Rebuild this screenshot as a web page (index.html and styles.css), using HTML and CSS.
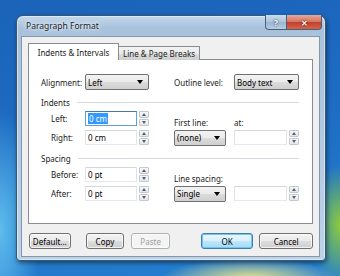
FILE: index.html
```html
<!DOCTYPE html>
<html lang="en">
<head>
    <meta charset="UTF-8">
    <title>Paragraph Format</title>
    <link rel="stylesheet" href="styles.css">
</head>
<body>
    <div class="desktop">
        <div class="window">
            <div class="titlebar">
                <span class="title">Paragraph Format</span>
                <div class="caption-btns">
                    <span class="cap-btn help-btn">?</span>
                    <span class="cap-btn close-btn">✕</span>
                </div>
            </div>
            <div class="client">
                <div class="tabs">
                    <div class="tab active">Indents &amp; Intervals</div>
                    <div class="tab">Line &amp; Page Breaks</div>
                </div>
                <div class="panel">
                    <div class="row-top">
                        <div class="col-left">
                            <span class="lbl lbl-align">Alignment:</span>
                            <div class="combo combo-align">Left<span class="arrow"></span></div>
                        </div>
                        <div class="col-right">
                            <span class="lbl lbl-outline">Outline level:</span>
                            <div class="combo combo-outline">Body text<span class="arrow"></span></div>
                        </div>
                    </div>

                    <div class="group-head"><span>Indents</span><span class="rule"></span></div>
                    <div class="group-body">
                        <div class="col-left">
                            <div class="field">
                                <span class="lbl lbl-field">Left:</span>
                                <div class="edit focused"><span class="sel">0 cm</span></div>
                                <div class="spin"><span class="up"></span><span class="down"></span></div>
                            </div>
                            <div class="field">
                                <span class="lbl lbl-field">Right:</span>
                                <div class="edit">0 cm</div>
                                <div class="spin"><span class="up"></span><span class="down"></span></div>
                            </div>
                        </div>
                        <div class="col-right stack">
                            <div class="label-row">
                                <span class="lbl lbl-first">First line:</span>
                                <span class="lbl">at:</span>
                            </div>
                            <div class="field">
                                <div class="combo combo-small">(none)<span class="arrow"></span></div>
                                <div class="edit edit-at"></div>
                                <div class="spin"><span class="up"></span><span class="down"></span></div>
                            </div>
                        </div>
                    </div>

                    <div class="group-head"><span>Spacing</span><span class="rule"></span></div>
                    <div class="group-body">
                        <div class="col-left">
                            <div class="field">
                                <span class="lbl lbl-field">Before:</span>
                                <div class="edit">0 pt</div>
                                <div class="spin"><span class="up"></span><span class="down"></span></div>
                            </div>
                            <div class="field">
                                <span class="lbl lbl-field">After:</span>
                                <div class="edit">0 pt</div>
                                <div class="spin"><span class="up"></span><span class="down"></span></div>
                            </div>
                        </div>
                        <div class="col-right stack">
                            <div class="label-row">
                                <span class="lbl">Line spacing:</span>
                            </div>
                            <div class="field">
                                <div class="combo combo-small">Single<span class="arrow"></span></div>
                                <div class="edit edit-at"></div>
                                <div class="spin"><span class="up"></span><span class="down"></span></div>
                            </div>
                        </div>
                    </div>
                </div>

                <div class="buttons">
                    <button class="btn btn-default">Default...</button>
                    <button class="btn btn-copy">Copy</button>
                    <button class="btn btn-paste" disabled>Paste</button>
                    <button class="btn btn-ok">OK</button>
                    <button class="btn btn-cancel">Cancel</button>
                </div>
            </div>
        </div>
    </div>
</body>
</html>
```

FILE: styles.css
```css
body {
    margin: 0;
    width: 340px;
    height: 276px;
    overflow: hidden;
    font-family: "Noto Sans", "Open Sans", sans-serif;
    font-size: 8px;
    color: #1a1a1a;
    background:
        radial-gradient(ellipse 40px 120px at 0px 230px, #5fbdee 0%, rgba(95, 189, 238, 0) 100%),
        radial-gradient(ellipse 30px 60px at 340px 225px, #8ccb3c 0%, rgba(140, 203, 60, 0) 100%),
        radial-gradient(ellipse 90px 22px at 250px 280px, #f6eb86 0%, rgba(246, 235, 134, 0) 100%),
        linear-gradient(170deg, #1a63b9 0%, #1e6dc3 50%, #2580d0 100%);
}

.desktop {
    padding: 15px 0 0 16px;
}

.window {
    width: 310px;
    height: 246px;
    box-sizing: border-box;
    border: 1px solid #3d556e;
    border-radius: 7px 7px 4px 4px;
    background: linear-gradient(180deg, #c3d8ec 0%, #a8c2dc 12px, #b3cce4 60%, #bcd3e9 100%);
    box-shadow: 1px 2px 4px rgba(0, 0, 0, 0.45), inset 0 0 0 1px rgba(255, 255, 255, 0.45);
    padding: 0 5px 3px 4px;
    display: flex;
    flex-direction: column;
}

.titlebar {
    height: 20px;
    display: flex;
    align-items: flex-start;
    justify-content: space-between;
}

.title {
    margin: 4px 0 0 5px;
    font-size: 8.5px;
    color: #141c26;
    text-shadow: 0 0 6px #fff, 0 0 3px #fff;
}

.caption-btns {
    display: flex;
    margin: -1px -2px 0 0;
}

.cap-btn {
    height: 14px;
    display: flex;
    align-items: center;
    justify-content: center;
    border: 1px solid #4a5f76;
    border-top: none;
    font-weight: bold;
    color: #fff;
}

.help-btn {
    width: 20px;
    border-radius: 0 0 0 4px;
    background: linear-gradient(180deg, #c9dbec 0%, #abc4dd 50%, #98b5d2 51%, #b6cde3 100%);
    font-size: 9px;
    text-shadow: 0 0 2px #33485e, 0 0 1px #33485e;
}

.close-btn {
    width: 34px;
    border-left: none;
    border-radius: 0 0 4px 0;
    background: linear-gradient(180deg, #e7a79a 0%, #d5735f 50%, #c2402a 51%, #d5634b 100%);
    font-size: 8px;
    text-shadow: 0 0 2px #4a130a, 0 0 1px #4a130a;
}

.client {
    flex: 1;
    background: #f0f0f0;
    border: 1px solid #8497ab;
    padding: 6px 6px 0 6px;
    display: flex;
    flex-direction: column;
}

.tabs {
    display: flex;
    align-items: flex-end;
    height: 17px;
    position: relative;
    z-index: 1;
}

.tab {
    height: 14px;
    display: flex;
    align-items: center;
    justify-content: center;
    white-space: nowrap;
    border: 1px solid #898c95;
    border-bottom: none;
    background: linear-gradient(180deg, #f2f2f2 0%, #ebebeb 50%, #dddddd 51%, #cfcfcf 100%);
    box-sizing: border-box;
    width: 82px;
}

.tab.active {
    width: 91px;
    height: 17px;
    background: #fff;
    margin-right: -1px;
    position: relative;
    z-index: 2;
}

.panel {
    height: 165px;
    box-sizing: border-box;
    border: 1px solid #898c95;
    margin-top: -1px;
    background: #fff;
    padding: 14px 13px 0 12px;
}

.lbl {
    white-space: nowrap;
}

.row-top,
.group-body {
    display: flex;
}

.col-left {
    width: 133px;
    flex-shrink: 0;
    display: flex;
    align-items: center;
}

.group-body .col-left {
    flex-direction: column;
    align-items: stretch;
    gap: 4px;
}

.col-right {
    display: flex;
    align-items: center;
}

.col-right.stack {
    flex-direction: column;
    align-items: stretch;
    justify-content: flex-end;
}

.lbl-align {
    width: 44px;
}

.lbl-outline {
    width: 60px;
}

.group-head {
    display: flex;
    align-items: center;
    height: 12px;
    margin: 6px 0 3px;
}

.rule {
    flex: 1;
    height: 1px;
    margin-left: 7px;
    background: #d5d9de;
}

.group-head + .group-body {
    margin-bottom: 7px;
}

.field {
    display: flex;
    align-items: center;
    height: 15px;
}

.lbl-field {
    width: 34px;
    padding-left: 10px;
}

.label-row {
    display: flex;
    height: 12px;
    align-items: center;
    margin-bottom: 2px;
}

.lbl-first {
    width: 60px;
}

.combo {
    height: 16px;
    box-sizing: border-box;
    border: 1px solid #707070;
    border-radius: 2px;
    background: linear-gradient(180deg, #f2f2f2 0%, #ebebeb 50%, #dddddd 51%, #cfcfcf 100%);
    display: flex;
    align-items: center;
    justify-content: space-between;
    padding: 0 5px 0 2px;
    color: #000;
}

.combo-align {
    width: 64px;
}

.combo-outline {
    width: 65px;
}

.combo-small {
    width: 52px;
    margin-right: 8px;
}

.arrow {
    width: 0;
    height: 0;
    border-left: 3px solid transparent;
    border-right: 3px solid transparent;
    border-top: 4px solid #000;
}

.edit {
    width: 52px;
    height: 15px;
    box-sizing: border-box;
    border: 1px solid #abadb3;
    border-top-color: #d4d6da;
    border-left-color: #e2e3ea;
    border-right-color: #e2e3ea;
    border-bottom-color: #e3e9ef;
    background: #fff;
    display: flex;
    align-items: center;
    padding-left: 2px;
    color: #000;
}

.edit.focused {
    border-color: #5e9ee0;
    border-top-color: #3d7bad;
}

.sel {
    background: #3399ff;
    color: #fff;
    padding: 0 1px;
    line-height: 11px;
}

.edit-at {
    width: 53px;
}

.spin {
    width: 10px;
    height: 15px;
    margin-left: 2px;
    display: flex;
    flex-direction: column;
    gap: 1px;
}

.spin span {
    flex: 1;
    box-sizing: border-box;
    border: 1px solid #c5c8cc;
    border-radius: 1px;
    background: linear-gradient(180deg, #f8f8f8 0%, #e6e6e6 100%);
    display: flex;
    align-items: center;
    justify-content: center;
}

.spin .up::after {
    content: "";
    border-left: 2px solid transparent;
    border-right: 2px solid transparent;
    border-bottom: 3px solid #4b5e80;
}

.spin .down::after {
    content: "";
    border-left: 2px solid transparent;
    border-right: 2px solid transparent;
    border-top: 3px solid #4b5e80;
}

.buttons {
    display: flex;
    margin-top: 9px;
    padding-left: 1px;
}

.btn {
    height: 16px;
    box-sizing: border-box;
    padding: 0;
    font-family: inherit;
    font-size: 8px;
    color: #000;
    border: 1px solid #707070;
    border-radius: 3px;
    background: linear-gradient(180deg, #f2f2f2 0%, #ebebeb 50%, #dddddd 51%, #cfcfcf 100%);
    box-shadow: inset 0 0 0 1px rgba(255, 255, 255, 0.7);
}

.btn-default {
    width: 42px;
}

.btn-copy {
    width: 39px;
    margin-left: 15px;
}

.btn-paste {
    width: 39px;
    margin-left: 7px;
    color: #a0a0a0;
    border-color: #adb2b5;
    background: #f4f4f4;
}

.btn-ok {
    width: 53px;
    margin-left: 31px;
    border-color: #3c7fb1;
    background: linear-gradient(180deg, #eaf6fd 0%, #d9f0fc 50%, #bee6fd 51%, #a7d9f5 100%);
    box-shadow: inset 0 0 0 1px #74c4ec;
}

.btn-cancel {
    width: 54px;
    margin-left: 6px;
}
```
